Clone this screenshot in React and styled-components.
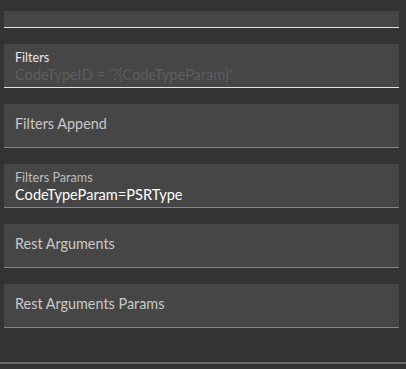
import React from 'react';
import styled, { createGlobalStyle } from 'styled-components';

const GlobalStyle = createGlobalStyle`
  html, body {
    margin: 0;
    padding: 0;
    background: #333333;
  }
  body {
    font-family: Lato, "Open Sans", sans-serif;
  }
`;

const Page = styled.div`
  width: 406px;
  height: 369px;
  display: flex;
  flex-direction: column;
  background: #333333;
  overflow: hidden;
`;

const FieldList = styled.div`
  display: flex;
  flex-direction: column;
  gap: 16px;
  padding: 11px 7px 0 4px;
  flex: 1;
`;

const Field = styled.div`
  display: flex;
  flex-direction: column;
  flex-shrink: 0;
`;

const FieldBody = styled.div`
  box-sizing: border-box;
  height: ${(p) => (p.$short ? '16px' : '43px')};
  background: #464646;
  padding: ${(p) => (p.$filled ? '7px 11px 0' : '10px 11px 0')};
  display: flex;
  flex-direction: column;
`;

const Underline = styled.div`
  height: 1px;
  background: ${(p) => (p.$active ? '#2aa1e6' : '#e2e2e2')};
`;

const Label = styled.div`
  font-size: 12.6px;
  line-height: 14px;
  color: ${(p) => (p.$dim ? '#bdbdbd' : '#e6e6e6')};
`;

const Placeholder = styled.div`
  font-size: 14.4px;
  line-height: 20px;
  color: #c9c9c9;
`;

const Value = styled.div`
  font-size: 14.6px;
  line-height: 20px;
  color: ${(p) => (p.$muted ? '#5e5e5e' : '#ffffff')};
  white-space: nowrap;
`;

const BottomRule = styled.div`
  height: 2px;
  background: #6a6a6a;
  margin-bottom: 5px;
`;

const fields = [
  { label: 'Filters', value: "CodeTypeID = '?{CodeTypeParam}'", muted: true, active: false },
  { label: 'Filters Append', active: true },
  { label: 'Filters Params', value: 'CodeTypeParam=PSRType', active: true },
  { label: 'Rest Arguments', active: true },
  { label: 'Rest Arguments Params', active: true },
];

export default function App() {
  return (
    <Page>
      <GlobalStyle />
      <FieldList>
        <Field>
          <FieldBody $short />
          <Underline />
        </Field>
        {fields.map((f) => (
          <Field key={f.label}>
            {f.value ? (
              <FieldBody $filled>
                <Label $dim={f.active}>{f.label}</Label>
                <Value $muted={f.muted}>{f.value}</Value>
              </FieldBody>
            ) : (
              <FieldBody>
                <Placeholder>{f.label}</Placeholder>
              </FieldBody>
            )}
            <Underline $active={f.active} />
          </Field>
        ))}
      </FieldList>
      <BottomRule />
    </Page>
  );
}
